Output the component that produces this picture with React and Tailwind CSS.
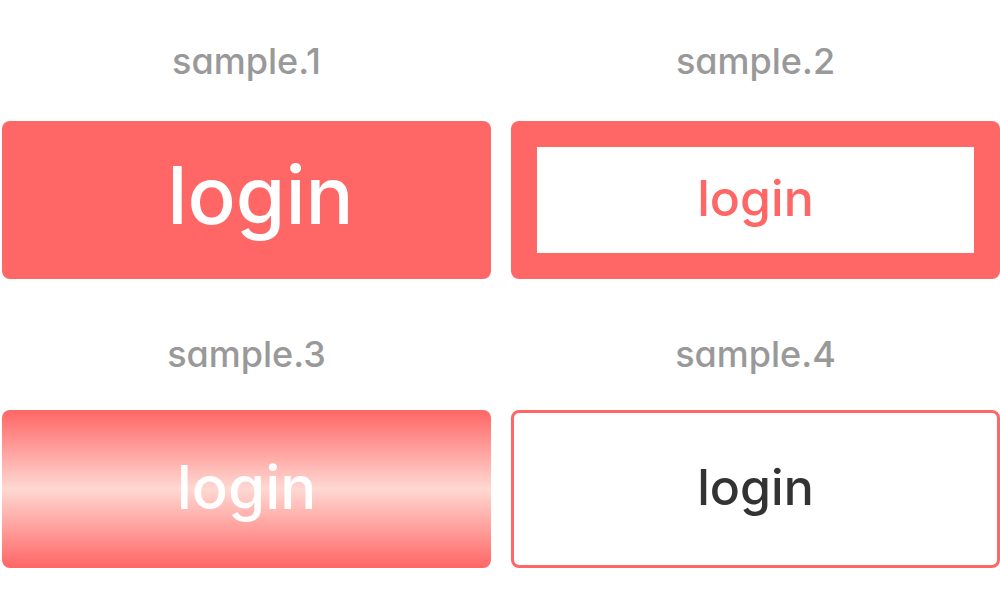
export default function App() {
  const font = "font-['Inter','Noto_Sans',sans-serif] [font-feature-settings:'cv11']";
  return (
    <div className={`w-[1000px] h-[611px] bg-white ${font}`}>
      <div className="grid grid-cols-[489px_489px] gap-x-[20px] pl-[2px]">
        <div className="h-[121px] flex justify-center items-start pt-[36px] text-[36px] leading-[50px] font-medium text-[#999999]">sample.1</div>
        <div className="h-[121px] flex justify-center items-start pt-[36px] text-[36px] leading-[50px] font-medium text-[#999999]">sample.2</div>
        <div className="h-[158px] rounded-lg bg-[#ff6666] flex items-center justify-center text-white text-[80px] font-medium pl-[28px] pb-[10px]">login</div>
        <div className="h-[158px] rounded-lg bg-[#ff6666] p-[26px]">
          <div className="h-full bg-white flex items-center justify-center text-[#ff6666] text-[50px] font-medium pb-[4px]">login</div>
        </div>
        <div className="h-[131px] flex justify-center items-start pt-[50px] text-[36px] leading-[50px] font-medium text-[#999999]">sample.3</div>
        <div className="h-[131px] flex justify-center items-start pt-[50px] text-[36px] leading-[50px] font-medium text-[#999999]">sample.4</div>
        <div className="h-[158px] rounded-lg bg-[linear-gradient(to_bottom,#ff6666_0%,#ffd8d2_50%,#ff6666_100%)] flex items-center justify-center text-white text-[60px] font-medium pb-[4px]">login</div>
        <div className="h-[158px] rounded-lg border-[3px] border-[#ff6666] bg-white flex items-center justify-center text-[#333333] text-[50px] font-medium pb-[4px]">login</div>
      </div>
    </div>
  );
}
